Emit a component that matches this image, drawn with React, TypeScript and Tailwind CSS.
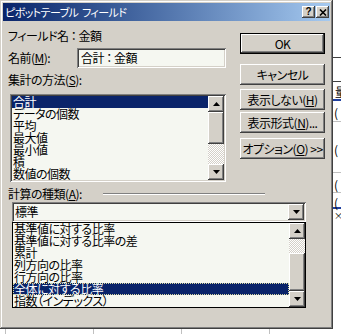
import React from 'react';

const raised =
  'bg-[#d4d0c8] shadow-[inset_-1px_-1px_#404040,inset_1px_1px_#ffffff,inset_-2px_-2px_#808080,inset_2px_2px_#d4d0c8]';
const sunken =
  'shadow-[inset_1px_1px_#808080,inset_-1px_-1px_#ffffff,inset_2px_2px_#404040,inset_-2px_-2px_#d4d0c8]';
const dither =
  'bg-[repeating-conic-gradient(#d4d0c8_0_25%,#ffffff_0_50%)] bg-[length:2px_2px]';

const methods = ['合計', 'データの個数', '平均', '最大値', '最小値', '積', '数値の個数'];
const calcTypes = [
  '基準値に対する比率',
  '基準値に対する比率の差',
  '累計',
  '列方向の比率',
  '行方向の比率',
  '全体に対する比率',
  '指数（インデックス）',
];

function Arrow({ up }: { up?: boolean }) {
  return (
    <div className={`${raised} w-4 h-4 shrink-0 flex items-center justify-center`}>
      <svg width="7" height="4" viewBox="0 0 7 4">
        <polygon points={up ? '3.5,0 7,4 0,4' : '0,0 7,0 3.5,4'} fill="#000" />
      </svg>
    </div>
  );
}

function Btn({ children, def }: { children: React.ReactNode; def?: boolean }) {
  return (
    <div className={def ? 'border border-black' : ''}>
      <div
        className={`${raised} ${def ? 'h-[19px]' : 'h-[21px]'} flex items-center justify-center whitespace-nowrap`}
      >
        {children}
      </div>
    </div>
  );
}

export default function App() {
  return (
    <div className="w-[341px] h-[334px] bg-white overflow-hidden flex flex-col text-[12px] leading-[12px] tracking-[-0.5px] text-black font-['Noto_Sans_CJK_JP',sans-serif] [font-feature-settings:'palt']">
      <div className="flex h-[329px] shrink-0">
        {/* dialog window */}
        <div className="w-[333px] h-full bg-[#d4d0c8] p-[3px] flex flex-col shadow-[inset_-1px_-1px_#404040,inset_1px_1px_#d4d0c8,inset_-2px_-2px_#808080,inset_2px_2px_#ffffff]">
          {/* title bar */}
          <div className="h-[18px] shrink-0 bg-linear-to-r from-[#0a246a] to-[#a6caf0] flex items-center pl-[2px] pr-[1px]">
            <span className="text-white flex-1 text-[11px] leading-[12px] tracking-[-0.6px] whitespace-pre">
              ピボットテーブル  フィールド
            </span>
            <div className="flex gap-[1px]">
              <div
                className={`${raised} w-[13px] h-[12px] flex items-center justify-center text-[10px] leading-[10px] tracking-normal font-bold font-['Liberation_Sans',sans-serif]`}
              >
                ?
              </div>
              <div className={`${raised} w-[13px] h-[12px] flex items-center justify-center`}>
                <svg width="8" height="7" viewBox="0 0 8 7">
                  <path d="M1 0.5 L7 6.5 M7 0.5 L1 6.5" stroke="#000" strokeWidth="1.6" />
                </svg>
              </div>
            </div>
          </div>

          {/* body */}
          <div className="flex-1 flex flex-col pl-[5px]">
            <div className="flex">
              {/* left column */}
              <div className="w-[232px] flex flex-col">
                <div className="mt-[9px] h-[12px] whitespace-pre">フィールド名 ： 金額</div>
                <div className="mt-[6px] h-[20px] flex items-center">
                  <span className="w-[69px]">
                    名前(<span className="underline">M</span>):
                  </span>
                  <div
                    className={`w-[149px] h-[20px] bg-[#f5f7f1] ${sunken} flex items-center pl-[4px] whitespace-pre`}
                  >
                    合計 ： 金額
                  </div>
                </div>
                <div className="mt-[6px] h-[12px]">
                  集計の方法(<span className="underline">S</span>):
                </div>
                <div className={`mt-[8px] ml-[2px] w-[216px] h-[88px] bg-[#f5f7f1] ${sunken} p-[2px] flex`}>
                  <div className="flex-1 flex flex-col">
                    {methods.map((m, i) => (
                      <div
                        key={m}
                        className={`h-[12px] pl-[1px] ${i === 0 ? 'bg-[#0a246a] text-white' : ''}`}
                      >
                        {m}
                      </div>
                    ))}
                  </div>
                  <div className="w-4 flex flex-col">
                    <Arrow up />
                    <div className={`${raised} h-[32px]`} />
                    <div className={`flex-1 ${dither}`} />
                    <Arrow />
                  </div>
                </div>
              </div>

              {/* right column buttons */}
              <div className="w-[85px] flex flex-col pt-[12px]">
                <Btn def>OK</Btn>
                <div className="mt-[10px]">
                  <Btn>キャンセル</Btn>
                </div>
                <div className="mt-[4px]">
                  <Btn>
                    表示しない(<span className="underline">H</span>)
                  </Btn>
                </div>
                <div className="mt-[2px]">
                  <Btn>
                    表示形式(<span className="underline">N</span>)...
                  </Btn>
                </div>
                <div className="mt-[5px]">
                  <Btn>
                    オプション(<span className="underline">O</span>) &gt;&gt;
                  </Btn>
                </div>
              </div>
            </div>

            {/* calc type */}
            <div className="mt-[6px] h-[12px] flex items-center">
              <span className="w-[95px]">
                計算の種類(<span className="underline">A</span>):
              </span>
              <div className="w-[162px] h-[2px] border-t border-[#808080] border-b border-b-white" />
            </div>
            <div className={`relative mt-[2px] ml-[4px] w-[294px] h-[20px] bg-[#f5f7f1] ${sunken} flex items-center p-[2px]`}>
              <span className="flex-1 pl-[1px]">標準</span>
              <Arrow />

              {/* open dropdown list */}
              <div className="absolute top-full left-0 w-[294px] h-[86px] bg-[#f5f7f1] border border-black flex z-10">
                <div className="flex-1 flex flex-col">
                  {calcTypes.map((c, i) => (
                    <div
                      key={c}
                      className={`h-[12px] pl-[1px] ${i === 5 ? 'bg-[#0a246a] text-white outline-1 outline-dotted -outline-offset-1 outline-[#d8d8a0]' : ''}`}
                    >
                      {c}
                    </div>
                  ))}
                </div>
                <div className="w-4 flex flex-col">
                  <Arrow up />
                  <div className={`h-[14px] ${dither}`} />
                  <div className={`${raised} flex-1`} />
                  <Arrow />
                </div>
              </div>
            </div>
          </div>
        </div>

        {/* sheet behind, right edge */}
        <div className="flex-1 flex flex-col bg-white overflow-hidden text-black">
          <div className="h-[58px] border-b border-[#404040]" />
          <div className="h-[24px] border-b border-[#404040]" />
          <div className="h-[19px] border-b-2 border-[#2040a0] pl-[2px] pt-[4px] whitespace-nowrap">量</div>
          <div className="h-[21px] border-b border-[#c0c0c0] pl-[1px] pt-[6px]">(</div>
          <div className="h-[51px] border-b border-[#c0c0c0] pl-[1px] pt-[22px]">(</div>
          <div className="h-[20px] border-b border-[#c0c0c0] pl-[1px] pt-[6px]">(</div>
          <div className="h-[16px] border-b-2 border-[#2040a0] pl-[1px] pt-[4px]">(</div>
          <div className="pl-[1px] pt-[2px] text-[9px] leading-[9px]">×</div>
        </div>
      </div>

      {/* sheet behind, bottom edge */}
      <div className="flex-1 flex bg-white">
        <div className="w-[5px]" />
        <div className="w-[88px] border-l border-[#c0c0c0]" />
        <div className="w-[88px] border-l border-[#c0c0c0]" />
        <div className="w-[88px] border-l border-[#c0c0c0]" />
        <div className="flex-1 border-l border-[#c0c0c0]" />
      </div>
    </div>
  );
}
